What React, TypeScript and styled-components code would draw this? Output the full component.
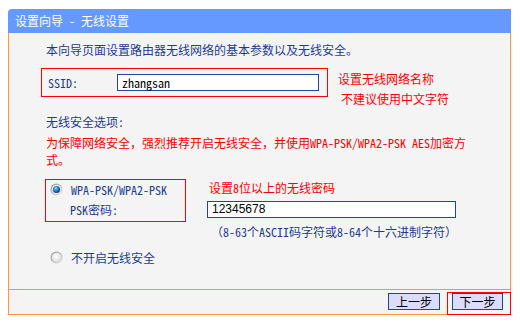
import React from "react"
import styled, { createGlobalStyle } from "styled-components"

const GlobalStyle = createGlobalStyle`
  body {
    margin: 0;
    background: #ffffff;
    font-family: "Noto Sans Mono CJK SC", "Noto Sans CJK SC", sans-serif;
    font-size: 12px;
  }
`

const blue = "#1c3c96"
const orange = "#ff9933"
const red = "#ff0000"

const Panel = styled.div`
  margin: 9px 0 0 8px;
  width: 503px;
`

const TitleBar = styled.div`
  height: 24px;
  background: #6699ff;
  border-top-left-radius: 4px;
  color: #ffffff;
  font-size: 12px;
  line-height: 24px;
  padding-left: 7px;
  white-space: pre;
`

const Body = styled.div`
  border: 1px solid ${orange};
  border-top: none;
  background: #f4f4f4;
`

const Content = styled.div`
  height: 256px;
  box-sizing: border-box;
  padding: 8px 0 0 37px;
  display: flex;
  flex-direction: column;
  color: ${blue};
  line-height: 17px;
`

const Text = styled.div<{ $color?: string; $top?: number }>`
  color: ${(p) => p.$color || blue};
  margin-top: ${(p) => p.$top || 0}px;
`

const Warn = styled(Text)`
  width: 426px;
`

const Row = styled.div<{ $top: number }>`
  display: flex;
  align-items: flex-start;
  margin-top: ${(p) => p.$top}px;
`

const RedBox = styled.div<{ $w: number; $h: number; $left?: number }>`
  box-sizing: border-box;
  width: ${(p) => p.$w}px;
  height: ${(p) => p.$h}px;
  margin-left: ${(p) => p.$left || 0}px;
  border: 1px solid ${red};
`

const SsidBox = styled(RedBox)`
  display: flex;
  align-items: center;
  padding-left: 6px;
`

const Label = styled.span<{ $w?: number }>`
  display: inline-block;
  width: ${(p) => (p.$w ? `${p.$w}px` : "auto")};
  color: ${blue};
`

const Input = styled.div<{ $w: number; $sans?: boolean }>`
  box-sizing: border-box;
  width: ${(p) => p.$w}px;
  height: 17px;
  border: 1px solid #2244a0;
  background: #ffffff;
  color: #000000;
  padding-left: 4px;
  line-height: 15px;
  font-family: ${(p) =>
    p.$sans ? `"Liberation Sans", sans-serif` : `"Noto Sans Mono CJK SC", "Liberation Mono", monospace`};
  font-size: ${(p) => (p.$sans ? 12 : 12)}px;
`

const HintCol = styled.div`
  margin-left: 10px;
  padding-top: 1px;
  line-height: 20px;
  color: ${red};
`

const HintLine = styled.div<{ $indent?: number }>`
  padding-left: ${(p) => p.$indent || 0}px;
`

const RadioBox = styled(RedBox)`
  display: flex;
  flex-direction: column;
`

const RadioRow = styled.div<{ $indent?: number }>`
  display: flex;
  align-items: center;
  height: 16px;
  padding-left: ${(p) => p.$indent || 4}px;
  gap: 8px;
  margin-top: 1px;
  & + & {
    margin-top: 4px;
  }
`

const RightCol = styled.div`
  margin-left: 21px;
  display: flex;
  flex-direction: column;
`

const Footer = styled.div`
  height: 25px;
  box-sizing: border-box;
  border-top: 1px solid ${orange};
  display: flex;
  justify-content: flex-end;
  align-items: flex-start;
  padding: 3px 7px 0 0;
  gap: 12px;
`

const Button = styled.button<{ $w: number }>`
  box-sizing: border-box;
  width: ${(p) => p.$w}px;
  height: 17px;
  padding: 0;
  border: 1px solid #2244a0;
  background: #dcdcff;
  color: #000000;
  font-family: "Noto Sans CJK SC", sans-serif;
  font-size: 12px;
  line-height: 15px;
`

const Marked = styled.div`
  position: relative;
  display: flex;
`

const Mark = styled.span`
  position: absolute;
  left: -5px;
  right: -8px;
  top: -1px;
  bottom: -5px;
  border: 1px solid ${red};
  pointer-events: none;
`

const Radio = ({ checked }: { checked?: boolean }) => (
  <svg width="13" height="13" viewBox="0 0 13 13">
    <defs>
      <linearGradient id="ring" x1="0" y1="0" x2="1" y2="1">
        <stop offset="0" stopColor="#8f8f8f" />
        <stop offset="1" stopColor="#e6e6e6" />
      </linearGradient>
      <radialGradient id="dot" cx="0.4" cy="0.35" r="0.7">
        <stop offset="0" stopColor="#9fd8ff" />
        <stop offset="0.5" stopColor="#1f7ad0" />
        <stop offset="1" stopColor="#0a2f6a" />
      </radialGradient>
      <radialGradient id="empty" cx="0.45" cy="0.4" r="0.7">
        <stop offset="0" stopColor="#ffffff" />
        <stop offset="1" stopColor="#d4d4d4" />
      </radialGradient>
    </defs>
    <circle cx="6.5" cy="6.5" r="6" fill="url(#ring)" />
    <circle cx="6.5" cy="6.5" r="4.8" fill={checked ? "#e8e8e8" : "url(#empty)"} />
    {checked && <circle cx="6.5" cy="6.5" r="3.6" fill="url(#dot)" />}
  </svg>
)

export default function App() {
  return (
    <>
      <GlobalStyle />
      <Panel>
        <TitleBar>设置向导 - 无线设置</TitleBar>
        <Body>
          <Content>
            <Text>本向导页面设置路由器无线网络的基本参数以及无线安全。</Text>
            <Row $top={10}>
              <SsidBox $w={287} $h={29} $left={-5}>
                <Label $w={69}>SSID:</Label>
                <Input $w={202}>zhangsan</Input>
              </SsidBox>
              <HintCol>
                <HintLine>设置无线网络名称</HintLine>
                <HintLine $indent={3}>不建议使用中文字符</HintLine>
              </HintCol>
            </Row>
            <Text $top={4}>无线安全选项:</Text>
            <Warn $color={red} $top={4}>
              为保障网络安全，强烈推荐开启无线安全，并使用WPA-PSK/WPA2-PSK AES加密方式。
            </Warn>
            <Row $top={11}>
              <RadioBox $w={141} $h={43} $left={-1}>
                <RadioRow>
                  <Radio checked />
                  <Label>WPA-PSK/WPA2-PSK</Label>
                </RadioRow>
                <RadioRow $indent={24}>
                  <Label>PSK密码:</Label>
                </RadioRow>
              </RadioBox>
              <RightCol>
                <HintLine $indent={2} style={{ color: red }}>
                  设置8位以上的无线密码
                </HintLine>
                <Text $top={5}>
                  <Input $w={249} $sans>
                    12345678
                  </Input>
                </Text>
                <Text $top={5}>
                  <HintLine $indent={4}>（8-63个ASCII码字符或8-64个十六进制字符）</HintLine>
                </Text>
              </RightCol>
            </Row>
            <Row $top={8}>
              <RadioRow>
                <Radio />
                <Label>不开启无线安全</Label>
              </RadioRow>
            </Row>
          </Content>
          <Footer>
            <Button $w={52}>上一步</Button>
            <Marked>
              <Button $w={51}>下一步</Button>
              <Mark />
            </Marked>
          </Footer>
        </Body>
      </Panel>
    </>
  )
}
